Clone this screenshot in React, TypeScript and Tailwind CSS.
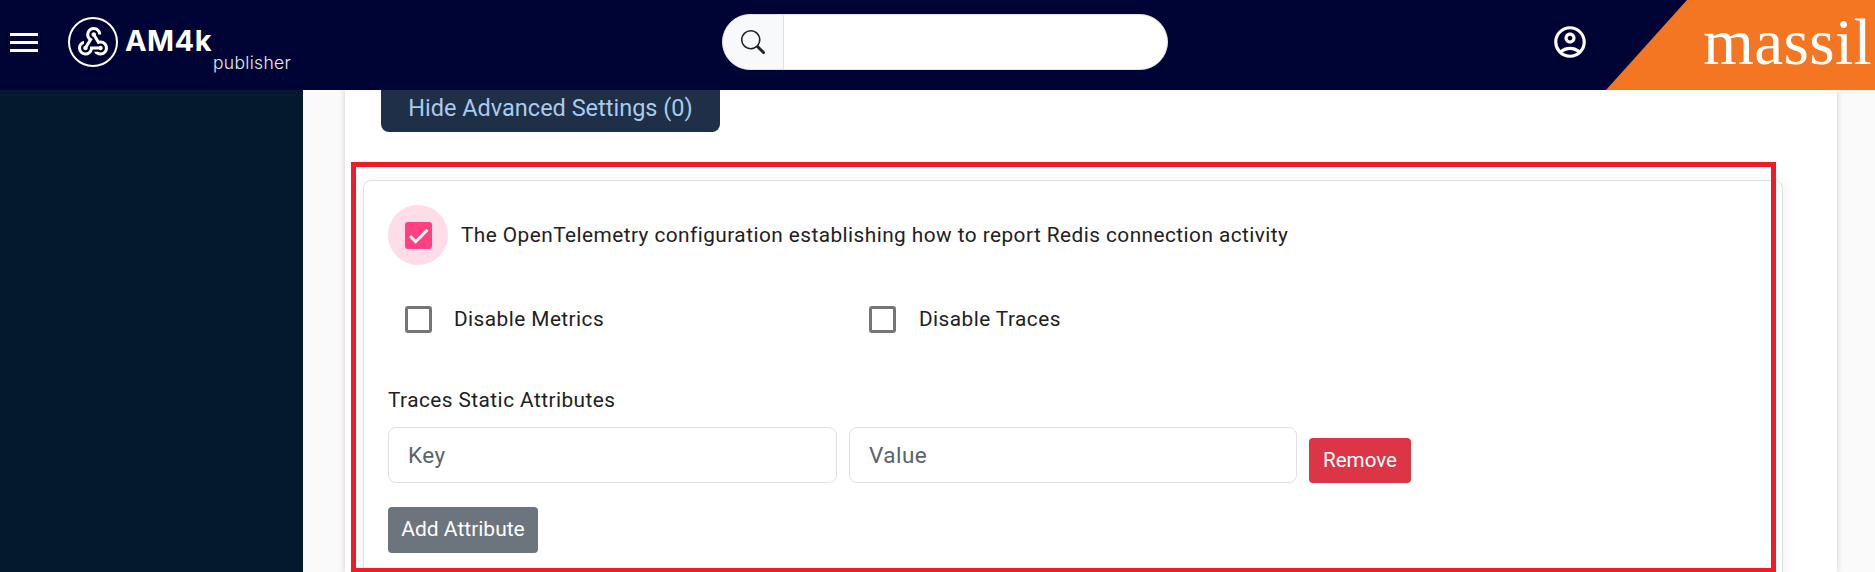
import { BsSearch } from "react-icons/bs";
import { MdOutlineAccountCircle, MdWebhook } from "react-icons/md";

function Checkbox({ checked }: { checked?: boolean }) {
  if (checked) {
    return (
      <span className="flex h-[27px] w-[27px] items-center justify-center rounded-[3px] bg-[#ff4081]">
        <svg viewBox="0 0 24 24" className="h-[27px] w-[27px]" fill="none" stroke="white" strokeWidth="2.6">
          <path d="M4.5 12.5l5 5L20 6.8" />
        </svg>
      </span>
    );
  }
  return <span className="block h-[27px] w-[27px] rounded-[3px] border-[3px] border-[#757575] bg-white" />;
}

function TextField({ placeholder, width }: { placeholder: string; width: string }) {
  return (
    <input
      placeholder={placeholder}
      className={`h-[56px] rounded-[8px] border border-[#dee2e6] bg-white px-[19px] text-[22.5px] text-[#212529] outline-none placeholder:text-[#5c636a] ${width}`}
    />
  );
}

function Header() {
  return (
    <header className="relative flex h-[90px] shrink-0 items-center bg-[#000435] pb-[6px]">
      <div className="ml-[10px] flex w-[28px] flex-col gap-[5px]">
        <span className="h-[3px] bg-white" />
        <span className="h-[3px] bg-white" />
        <span className="h-[3px] bg-white" />
      </div>
      <div className="ml-[30px] flex h-[50px] w-[50px] items-center justify-center rounded-full border-[2px] border-white">
        <MdWebhook size={36} color="white" />
      </div>
      <div className="ml-[7px] w-[163px] self-start pt-[24px]">
        <div className="font-['Inter',sans-serif] text-[29px] leading-[34px] font-bold text-white">AM4k</div>
        <div className="-mt-[5px] ml-[88px] font-['Inter',sans-serif] text-[17.5px] leading-[20px] font-light tracking-[0.3px] text-[#e8e8ee]">
          publisher
        </div>
      </div>
      <div className="ml-[434px] flex h-[56px] w-[446px] overflow-hidden rounded-full border border-[#dee2e6] bg-white">
        <div className="flex w-[61px] items-center justify-center border-r border-[#dee2e6] bg-[#f8f9fa]">
          <BsSearch size={24} color="#212529" />
        </div>
      </div>
      <MdOutlineAccountCircle size={38} color="white" className="ml-[383px]" />
      <div className="absolute top-0 right-0 flex h-[90px] w-[269px] items-start justify-end bg-[#f47623] pr-[3px] [clip-path:polygon(81px_0,100%_0,100%_100%,0_100%)]">
        <span className="font-['Liberation_Serif',serif] text-[65px] leading-[84px] text-white">massil</span>
      </div>
    </header>
  );
}

export default function App() {
  return (
    <div className="relative flex h-[572px] w-[1875px] flex-col overflow-hidden font-['Roboto',sans-serif] tracking-[0.45px] text-[#212121]">
      <Header />
      <div className="flex min-h-0 flex-1">
        <aside className="w-[303px] shrink-0 bg-[#05192e]" />
        <main className="flex-1 bg-[#fafafa] pr-[38px] pl-[42px]">
          <div className="h-full bg-white pr-[54px] pl-[18px] shadow-[0_0_6px_rgba(0,0,0,0.18)]">
            <button className="ml-[18px] block h-[42px] w-[339px] rounded-b-[8px] bg-[#1e2f47] pb-[6px] text-[23.5px] leading-[36px] tracking-normal text-[#a9cbeb]">
              Hide Advanced Settings (0)
            </button>
            <section className="mt-[48px] h-[500px] rounded-[8px] border border-[#dee2e6] bg-white pt-[24px] pl-[24px] shadow-[0_2px_16px_rgba(0,0,0,0.07)]">
              <div className="flex h-[60px] items-center">
                <span className="flex h-[60px] w-[60px] items-center justify-center rounded-full bg-[#ffdde8]">
                  <Checkbox checked />
                </span>
                <span className="ml-[13px] pt-px text-[20.8px]">
                  The OpenTelemetry configuration establishing how to report Redis connection activity
                </span>
              </div>
              <div className="mt-[41px] flex h-[27px] items-center pl-[17px] text-[20.8px]">
                <Checkbox />
                <span className="ml-[22px] w-[415px]">Disable Metrics</span>
                <Checkbox />
                <span className="ml-[23px]">Disable Traces</span>
              </div>
              <div className="mt-[55px] text-[20.8px] leading-[24px]">Traces Static Attributes</div>
              <div className="mt-[15px] flex items-end gap-[12px]">
                <TextField placeholder="Key" width="w-[449px]" />
                <TextField placeholder="Value" width="w-[448px]" />
                <button className="h-[45px] w-[102px] rounded-[4px] bg-[#dc3545] text-[20.6px] tracking-normal text-white">
                  Remove
                </button>
              </div>
              <button className="mt-[24px] block h-[46px] w-[150px] rounded-[4px] bg-[#6c757d] text-[21px] tracking-normal text-white">
                Add Attribute
              </button>
            </section>
          </div>
        </main>
      </div>
      {/* annotation frame drawn over the screenshot */}
      <div className="pointer-events-none absolute top-[162px] left-[351px] h-[411px] w-[1425px] border-[5px] border-[#ee1c25]" />
    </div>
  );
}
